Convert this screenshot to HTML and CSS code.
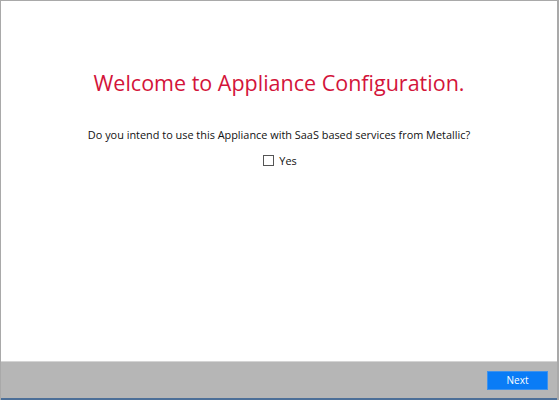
FILE: index.html
```html
<!DOCTYPE html>
<html>
<head>
<meta charset="utf-8">
<link rel="stylesheet" href="styles.css">
</head>
<body>
<div class="window">
  <main class="content">
    <h1 class="title">Welcome to Appliance Configuration.</h1>
    <p class="question">Do you intend to use this Appliance with SaaS based services from Metallic?</p>
    <label class="check"><span class="box"></span><span>Yes</span></label>
  </main>
  <footer class="footer">
    <button class="next">Next</button>
  </footer>
</div>
</body>
</html>
```
FILE: styles.css
```css
html, body {
  margin: 0;
  padding: 0;
  background: #fff;
}
.window {
  width: 559px;
  height: 400px;
  box-sizing: border-box;
  border-top: 1px solid #a9a9a9;
  border-left: 1px solid #a9a9a9;
  border-right: 2px solid #a9a9a9;
  display: flex;
  flex-direction: column;
  font-family: "Open Sans", "Noto Sans", sans-serif;
}
.content {
  flex: 1;
  display: flex;
  flex-direction: column;
  align-items: center;
  padding-top: 66px;
}
.title {
  margin: 0;
  font-weight: 400;
  font-size: 21.5px;
  line-height: 32px;
  color: #d3143a;
}
.question {
  margin: 28px 0 0;
  font-size: 10.9px;
  line-height: 16px;
  color: #111;
}
.check {
  margin-top: 10px;
  display: flex;
  align-items: center;
  gap: 5px;
  font-size: 10.9px;
  color: #111;
  margin-left: 2px;
}
.box {
  width: 9px;
  height: 9px;
  border: 1px solid #555;
  background: #fff;
}
.footer {
  height: 39px;
  background: #b6b6b6;
  border-top: 1px solid #d4d4d4;
  border-bottom: 2px solid #4c6f98;
  display: flex;
  justify-content: flex-end;
  align-items: flex-start;
  padding: 9px 9px 0 0;
  box-sizing: border-box;
  flex: none;
}
.next {
  width: 61px;
  height: 19px;
  background: #0a7cf6;
  border: 1px solid #3f92ec;
  color: #fff;
  font-family: "Open Sans", "Noto Sans", sans-serif;
  font-size: 10px;
  padding: 0;
  line-height: 17px;
}
```
